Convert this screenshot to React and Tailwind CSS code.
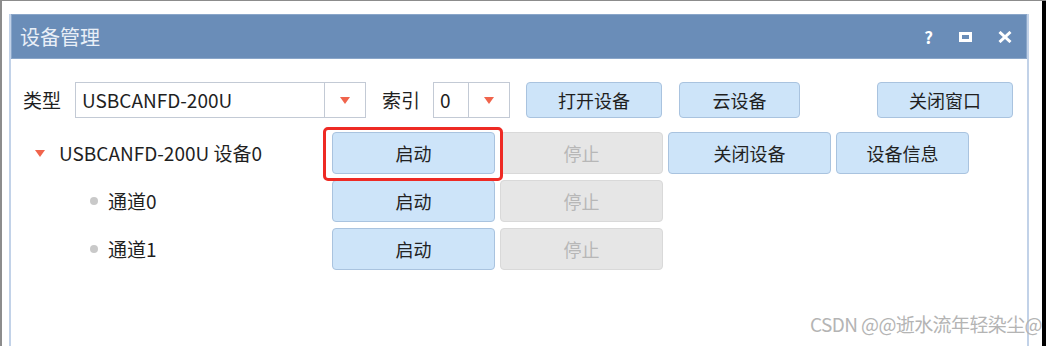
import React from 'react';

const font = { fontFamily: '"Noto Sans CJK SC", "Noto Sans", sans-serif' };

const Arrow = () => (
  <svg width="10" height="7" viewBox="0 0 10 7">
    <polygon points="0,0 10,0 5,7" fill="#f0644c" />
  </svg>
);

const Btn = ({ label, w, off }) => (
  <button
    className={
      'h-[42px] rounded-[4px] border text-[18px] leading-none ' +
      (off
        ? 'bg-[#e6e6e6] border-[#d9d9d9] text-[#b7b7b7]'
        : 'bg-[#cde4f9] border-[#a9c3df] text-[#222]')
    }
    style={{ width: w }}
  >
    {label}
  </button>
);

const App = () => {
  return (
    <div className="relative flex w-[1046px] h-[346px] overflow-hidden bg-white border-t border-l-2 border-[#8c8c8c]" style={font}>
      <div className="ml-[7px] mt-[13px] w-[1020px] h-[340px] flex flex-col border-x-2 border-[#c2d2e8]">
        {/* title bar */}
        <div className="h-[45px] flex items-center bg-[#6a8db8] border border-[#8aa6c9] pl-[8px] pr-[14px]">
          <span className="text-[20px] text-[#e9eff7]">设备管理</span>
          <div className="ml-auto flex items-center gap-[26px] text-white">
            <span className="text-[17px] font-bold">?</span>
            <div className="w-[13px] h-[10px] border-[3px] border-white"></div>
            <svg width="14" height="12" viewBox="0 0 14 12">
              <path d="M1.5 1 L12.5 11 M12.5 1 L1.5 11" stroke="white" strokeWidth="3" />
            </svg>
          </div>
        </div>

        {/* body */}
        <div className="flex flex-col pt-[23px] text-[#1f1f1f]">
          {/* row 1 */}
          <div className="flex items-center h-[36px] pl-[12px]">
            <span className="text-[19px] w-[52px]">类型</span>
            <div className="flex h-[36px] w-[291px] border border-[#c3cad5]">
              <div className="flex-1 flex items-center pl-[6px] text-[19px]">USBCANFD-200U</div>
              <div className="w-[41px] flex items-center justify-center border-l border-[#c3cad5]"><Arrow /></div>
            </div>
            <span className="text-[19px] ml-[16px] w-[51px]">索引</span>
            <div className="flex h-[36px] w-[77px] border border-[#c3cad5]">
              <div className="flex-1 flex items-center pl-[6px] text-[19px]">0</div>
              <div className="w-[41px] flex items-center justify-center border-l border-[#c3cad5]"><Arrow /></div>
            </div>
            <div className="ml-[16px] flex gap-[17px]">
              <button className="h-[36px] w-[136px] rounded-[4px] border border-[#a9c3df] bg-[#cde4f9] text-[18px]">打开设备</button>
              <button className="h-[36px] w-[121px] rounded-[4px] border border-[#a9c3df] bg-[#cde4f9] text-[18px]">云设备</button>
            </div>
            <button className="ml-[77px] h-[36px] w-[136px] rounded-[4px] border border-[#a9c3df] bg-[#cde4f9] text-[18px]">关闭窗口</button>
          </div>

          {/* row 2 */}
          <div className="flex items-center mt-[14px] h-[42px]">
            <div className="w-[321px] flex items-center pl-[24px]">
              <Arrow />
              <span className="ml-[14px] text-[19px]">USBCANFD-200U 设备0</span>
            </div>
            <div className="flex gap-[5px]">
              <div className="relative flex">
                <Btn label="启动" w={163} />
                <div className="absolute -left-[9px] -right-[8px] -top-[5px] -bottom-[7px] border-[3px] border-[#ee2a24] rounded-[5px]"></div>
              </div>
              <Btn label="停止" w={163} off />
              <Btn label="关闭设备" w={163} />
              <Btn label="设备信息" w={133} />
            </div>
          </div>

          {/* channel rows */}
          {['通道0', '通道1'].map((ch) => (
            <div key={ch} className="flex items-center mt-[6px] h-[42px]">
              <div className="w-[321px] flex items-center pl-[79px]">
                <div className="w-[8px] h-[8px] rounded-full bg-[#c9c9c9]"></div>
                <span className="ml-[10px] text-[19px]">{ch}</span>
              </div>
              <div className="flex gap-[5px]">
                <Btn label="启动" w={163} />
                <Btn label="停止" w={163} off />
              </div>
            </div>
          ))}
        </div>
      </div>
      <div className="ml-auto w-[4px] bg-black"></div>

      <span className="absolute right-[4px] bottom-[8px] text-[19px] text-[#b4b4b4] tracking-[-0.6px]">CSDN @@逝水流年轻染尘@</span>
    </div>
  );
};

export default App;
